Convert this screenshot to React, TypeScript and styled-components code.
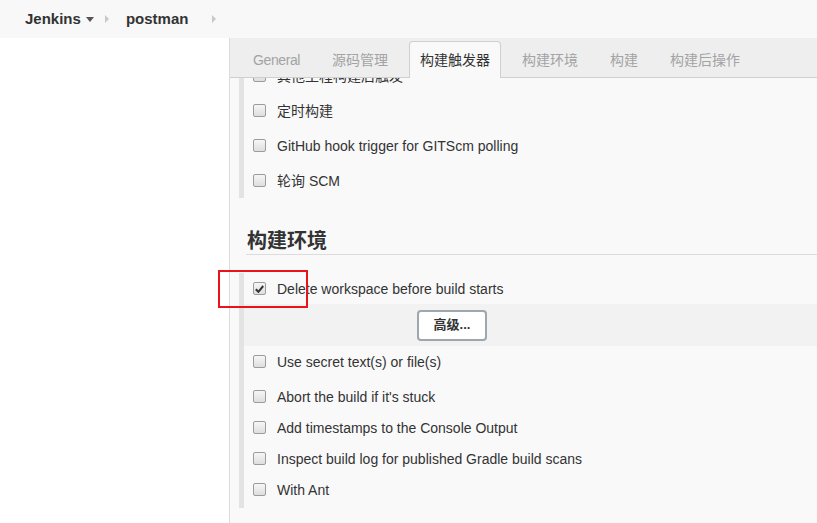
import React from "react";
import styled, { createGlobalStyle } from "styled-components";

const GlobalStyle = createGlobalStyle`
  html, body {
    margin: 0;
    padding: 0;
    background: #ffffff;
  }
  body {
    font-family: "Liberation Sans", "Noto Sans CJK SC", Arial, sans-serif;
    font-size: 14px;
    color: #333333;
  }
  * { box-sizing: border-box; }
`;

const Page = styled.div`
  position: relative;
  width: 100%;
  height: 523px;
  display: flex;
  flex-direction: column;
  overflow: hidden;
`;

const TopBar = styled.div`
  height: 38px;
  flex: 0 0 38px;
  background: #f8f8f8;
  display: flex;
  align-items: center;
  padding-left: 25px;
`;

const Crumb = styled.span`
  font-size: 15px;
  font-weight: bold;
  color: #333;
  line-height: 20px;
  margin-top: -1px;
`;

const CaretBox = styled.span<{ $ml: number; $mr: number }>`
  display: inline-flex;
  align-items: center;
  margin-left: ${(p) => p.$ml}px;
  margin-right: ${(p) => p.$mr}px;
`;

const Body = styled.div`
  flex: 1;
  display: flex;
  min-height: 0;
`;

const Sidebar = styled.div`
  width: 229px;
  flex: 0 0 229px;
  background: #ffffff;
`;

const Main = styled.div`
  flex: 1;
  display: flex;
  flex-direction: column;
  border-left: 1px solid #dcdcdc;
  background: #f9f9f9;
  min-width: 0;
`;

const TabBar = styled.div`
  height: 40px;
  flex: 0 0 40px;
  background: #eeeeee;
  border-bottom: 1px solid #cfcfcf;
  display: flex;
  align-items: flex-end;
  padding-left: 12px;
  position: relative;
  z-index: 2;
`;

const Tab = styled.div<{ $active?: boolean; $tight?: boolean }>`
  padding: 0 10px;
  margin-right: 10px;
  display: flex;
  align-items: center;
  font-size: 14px;
  line-height: 18px;
  letter-spacing: ${(p) => (p.$tight ? "-0.4px" : "0")};
  color: ${(p) => (p.$active ? "#333333" : "#a3a3a3")};
  background: ${(p) => (p.$active ? "#f9f9f9" : "transparent")};
  border: ${(p) => (p.$active ? "1px solid #cfcfcf" : "1px solid transparent")};
  border-bottom: none;
  border-radius: 4px 4px 0 0;
  margin-bottom: ${(p) => (p.$active ? "-1px" : "0")};
  height: ${(p) => (p.$active ? "37px" : "36px")};
  padding-bottom: ${(p) => (p.$active ? "1px" : "0")};
`;

const Content = styled.div`
  flex: 1;
  overflow: hidden;
  padding-left: 9px;
  display: flex;
  flex-direction: column;
`;

const Group = styled.div<{ $mt: number; $pb?: number }>`
  margin-top: ${(p) => p.$mt}px;
  border-left: 5px solid #e3e3e3;
  padding-bottom: ${(p) => p.$pb ?? 0}px;
  display: flex;
  flex-direction: column;
`;

const Row = styled.div<{ $h: number; $mb?: number }>`
  height: ${(p) => p.$h}px;
  margin-bottom: ${(p) => p.$mb ?? 0}px;
  display: flex;
  align-items: center;
  padding-left: 9px;
  font-size: 14px;
  line-height: 18px;
  color: #333;
  white-space: nowrap;
`;

const Box = styled.span`
  width: 13px;
  height: 13px;
  flex: 0 0 13px;
  border: 1px solid #9c9c9c;
  border-radius: 2px;
  background: linear-gradient(#f6f6f6, #dedede);
  margin-right: 11px;
  display: inline-flex;
  align-items: center;
  justify-content: center;
`;

const Heading = styled.div`
  margin: 30px 0 0 7px;
  font-size: 20px;
  line-height: 26px;
  font-weight: bold;
  color: #333;
  border-bottom: 1px solid #dcdcdc;
  padding-left: 1px;
`;

const Strip = styled.div`
  height: 42px;
  background: #f2f2f2;
  display: flex;
  align-items: center;
  padding-left: 173px;
`;

const AdvButton = styled.button`
  width: 70px;
  height: 31px;
  border: 2px solid #9ea6ae;
  border-radius: 4px;
  background: #ffffff;
  font-family: "Liberation Sans", "Noto Sans CJK SC", sans-serif;
  font-size: 13px;
  font-weight: bold;
  color: #333;
  padding: 0;
  line-height: 16px;
`;

const Annotation = styled.div`
  position: absolute;
  left: 218px;
  top: 270px;
  width: 90px;
  height: 38px;
  border: 2px solid #e8141a;
  pointer-events: none;
`;

const DownCaret = () => (
  <svg width="8" height="5" viewBox="0 0 8 5">
    <path d="M0 0 L8 0 L4 5 Z" fill="#555" />
  </svg>
);

const SepArrow = () => (
  <svg width="4" height="8" viewBox="0 0 4 8">
    <path d="M0 0 L4 4 L0 8 Z" fill="#c8c8c8" />
  </svg>
);

const CheckMark = () => (
  <svg width="9" height="8" viewBox="0 0 9 8">
    <path d="M0.8 4.2 L3.4 6.8 L8.2 1" stroke="#333" strokeWidth="2" fill="none" />
  </svg>
);

const Check: React.FC<{ label: string; checked?: boolean; h: number; mb?: number }> = ({
  label,
  checked,
  h,
  mb,
}) => (
  <Row $h={h} $mb={mb}>
    <Box>{checked ? <CheckMark /> : null}</Box>
    <span>{label}</span>
  </Row>
);

const tabs = ["General", "源码管理", "构建触发器", "构建环境", "构建", "构建后操作"];

export default function App() {
  return (
    <>
      <GlobalStyle />
      <Page>
        <TopBar>
          <Crumb>Jenkins</Crumb>
          <CaretBox $ml={5} $mr={11}>
            <DownCaret />
          </CaretBox>
          <CaretBox $ml={0} $mr={17}>
            <SepArrow />
          </CaretBox>
          <Crumb>postman</Crumb>
          <CaretBox $ml={24} $mr={0}>
            <SepArrow />
          </CaretBox>
        </TopBar>
        <Body>
          <Sidebar />
          <Main>
            <TabBar>
              {tabs.map((t) => (
                <Tab key={t} $active={t === "构建触发器"} $tight={t === "General"}>
                  {t}
                </Tab>
              ))}
            </TabBar>
            <Content>
              <Group $mt={-20}>
                <Check label="其他工程构建后触发" h={35} />
                <Check label="定时构建" h={35} />
                <Check label="GitHub hook trigger for GITScm polling" h={35} />
                <Check label="轮询 SCM" h={35} />
              </Group>
              <Heading>构建环境</Heading>
              <Group $mt={18} $pb={3}>
                <Check label="Delete workspace before build starts" checked h={31} />
                <Strip>
                  <AdvButton>高级...</AdvButton>
                </Strip>
                <Check label="Use secret text(s) or file(s)" h={31} mb={4} />
                <Check label="Abort the build if it's stuck" h={31} />
                <Check label="Add timestamps to the Console Output" h={31} />
                <Check label="Inspect build log for published Gradle build scans" h={31} />
                <Check label="With Ant" h={31} />
              </Group>
            </Content>
          </Main>
        </Body>
        <Annotation />
      </Page>
    </>
  );
}
